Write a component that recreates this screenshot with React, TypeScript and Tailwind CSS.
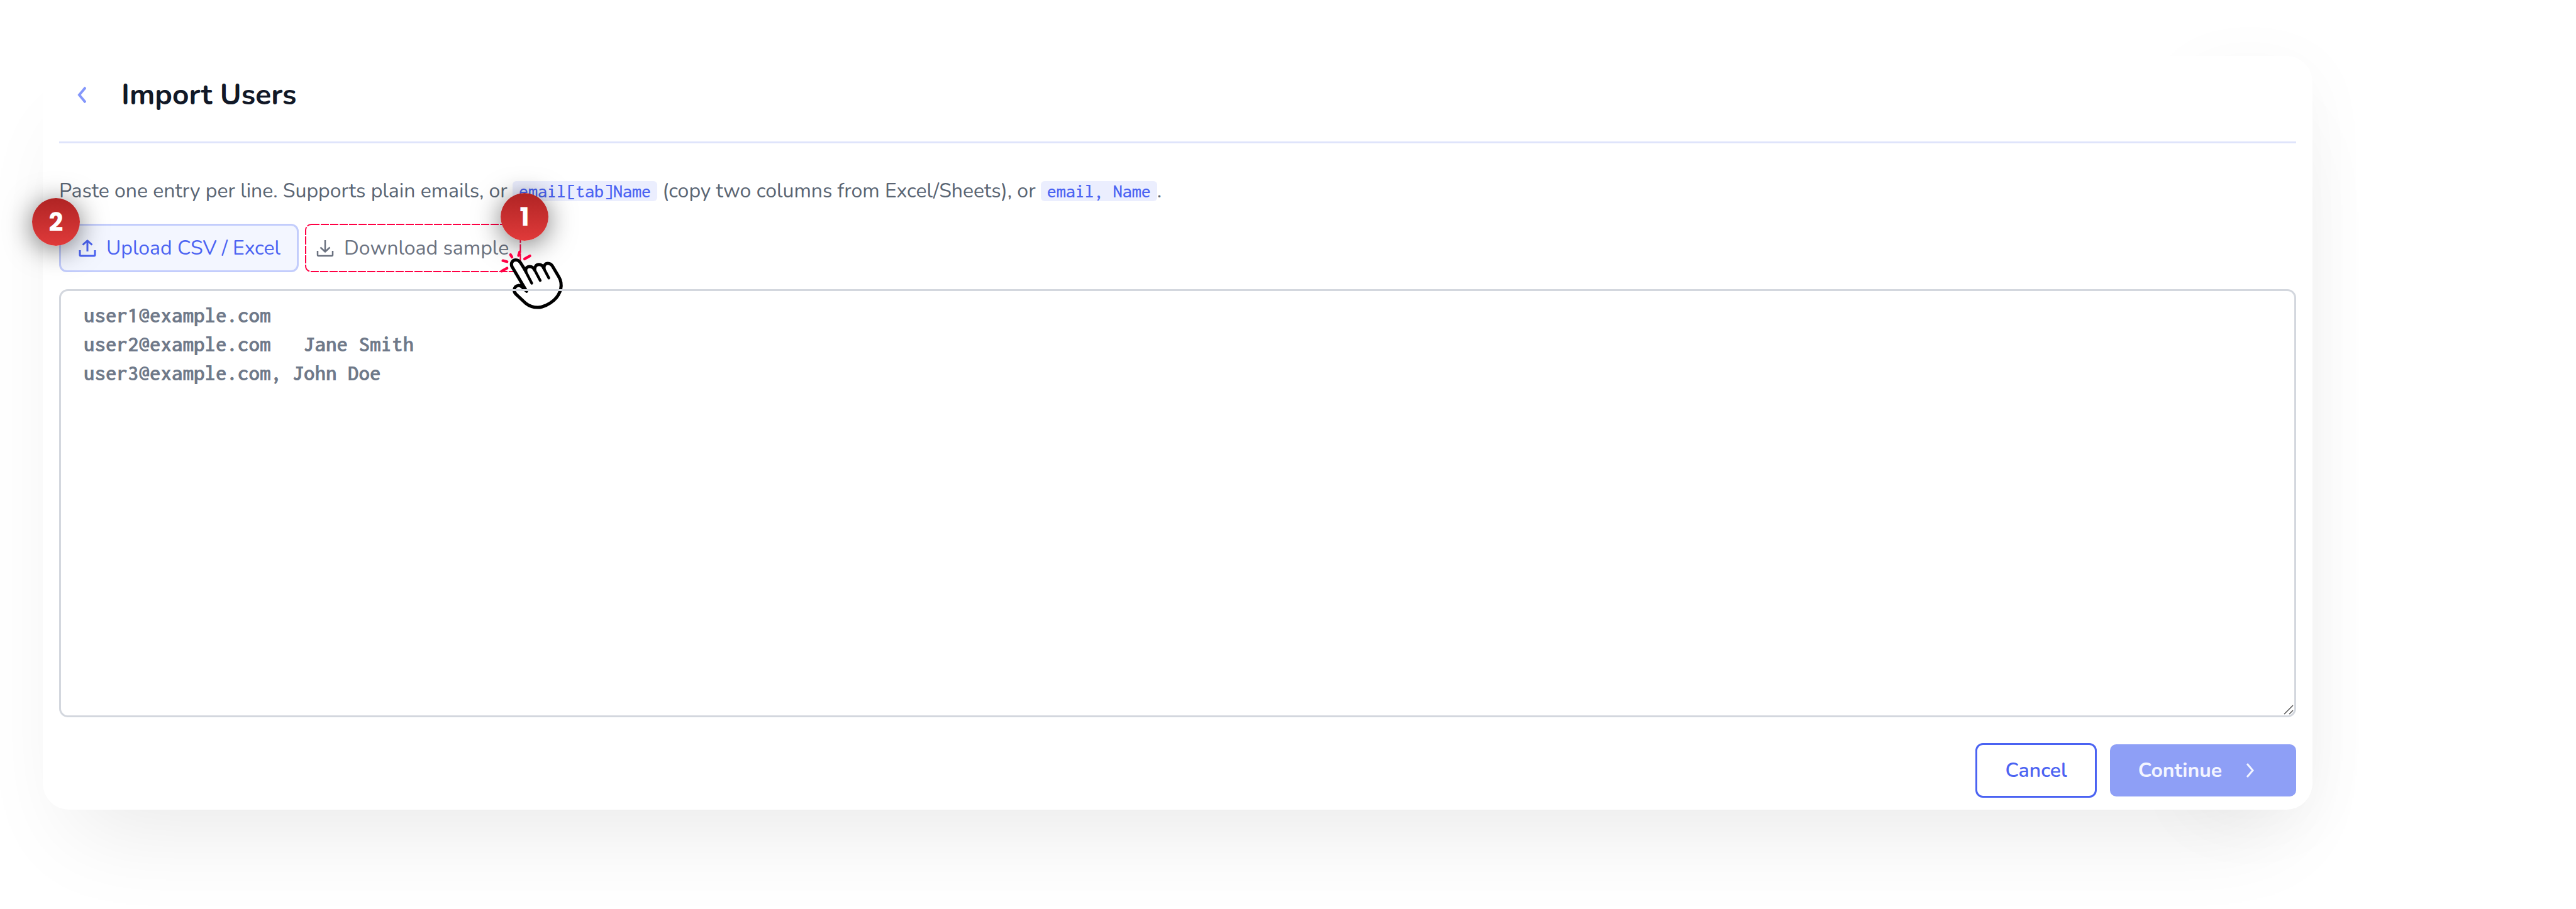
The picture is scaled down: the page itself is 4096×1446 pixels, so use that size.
import React from 'react';

const PLACEHOLDER = [
  'user1@example.com',
  'user2@example.com   Jane Smith',
  'user3@example.com, John Doe',
].join('\n');

const UploadIcon = () => (
  <svg className="size-7 shrink-0" viewBox="0 0 28 28" fill="none" stroke="currentColor" strokeWidth="3" strokeLinejoin="round">
    <path d="M2 17v7.5a1.5 1.5 0 0 0 1.5 1.5h21a1.5 1.5 0 0 0 1.5-1.5V17" />
    <path d="M14 19V3M6.5 8.5 14 1.8l7.5 6.7" />
  </svg>
);

const DownloadIcon = () => (
  <svg className="size-7 shrink-0" viewBox="0 0 28 28" fill="none" stroke="currentColor" strokeWidth="2.5" strokeLinejoin="round">
    <path d="M2 18v6.5a1.5 1.5 0 0 0 1.5 1.5h21a1.5 1.5 0 0 0 1.5-1.5V18" />
    <path d="M14 1v18M6.5 12.5 14 19.5l7.5-7" />
  </svg>
);

const Badge: React.FC<{ value: number; className: string }> = ({ value, className }) => (
  <span
    className={`absolute flex size-[76px] items-center justify-center rounded-full bg-linear-to-b from-[#b02424] to-[#e03a3a] font-[Poppins,Nunito,sans-serif] text-[40px] font-bold text-white shadow-[0_6px_44px_rgba(0,0,0,0.55)] ${className}`}
  >
    {value}
  </span>
);

const Code: React.FC<{ children: React.ReactNode }> = ({ children }) => (
  <code className="rounded-md bg-[#ebeefe] px-[10px] font-[Consolas,Inconsolata,'Liberation_Mono',monospace] text-[30px] leading-none font-medium text-[#4b63f2]">
    {children}
  </code>
);

// pointing hand with click marks
const HandPointer = () => (
  <svg className="pointer-events-none absolute top-[26px] left-[287px] size-[137px]" viewBox="0 0 600 600" fill="none" strokeLinecap="round" strokeLinejoin="round">
    <g stroke="#ff0044" strokeWidth="19">
      <path d="M112 216 150 195" />
      <path d="M121 143 150 150" />
      <path d="M174 101 184 118" />
      <path d="M238 82 230 107" />
      <path d="M272 131 309 110" />
    </g>
    <path
      d="M286 356 L184 184 C174 160 188 138 211 138 C229 138 238 148 246 161 L281 216 C274 200 290 184 308 184 C326 184 334 192 342 208 C342 184 354 170 372 170 C390 170 400 180 408 198 C404 178 416 162 434 162 C452 162 460 170 468 184 L512 258 C540 306 528 372 476 419 C446 446 400 468 364 469 C330 469 304 459 280 440 L214 378 C196 362 196 340 208 326 C218 314 238 312 252 324 Z"
      fill="#fff"
      stroke="#000"
      strokeWidth="22"
    />
    <path d="M270 200 322 300M338 200 381 281M402 190 441 264" stroke="#000" strokeWidth="19" />
  </svg>
);

const App: React.FC = () => (
  <div className="overflow-hidden bg-white pt-[89px] pr-[419px] pb-[158px] pl-[68px] font-[Nunito,'Nunito_Sans','Open_Sans',sans-serif] text-[32px] leading-[46px]">
    <div className="relative">
      <div className="absolute inset-y-0 right-0 w-[200px] rounded-[42px] shadow-[0_20px_110px_rgba(0,0,0,0.04)]" />
      <main className="relative rounded-[42px] bg-white px-[26px] pb-[19px] shadow-[0_80px_140px_-50px_rgba(0,0,0,0.09)]">
        <header className="flex items-center gap-[56px] border-b-3 border-[#dfe4fb] pt-[30px] pb-[42px] pl-[29px]">
          <button type="button" aria-label="Back" className="text-[#8497fb]">
            <svg className="h-[26px] w-[14px]" viewBox="0 0 14 26" fill="none" stroke="currentColor" strokeWidth="4">
              <path d="M13 1 3 13l10 12" />
            </svg>
          </button>
          <h1 className="text-[46px] leading-[64px] font-bold text-[#111827]">Import Users</h1>
        </header>

        <p className="mt-[53px] text-[#5a6573]">
          Paste one entry per line. Supports plain emails, or <Code>email[tab]Name</Code> (copy two columns from
          Excel/Sheets), or <Code>email, Name</Code>.
        </p>

        <div className="mt-[29px] flex gap-[10px]">
          <div className="relative">
            <button
              type="button"
              className="flex h-[77px] items-center gap-4 rounded-[12px] border-3 border-[#c3cdfc] bg-[#f3f6ff] pr-[26px] pl-[28px] text-[#4b63f2]"
            >
              <UploadIcon />
              Upload CSV / Excel
            </button>
            <Badge value={2} className="-top-[41px] -left-[43px]" />
          </div>
          <div className="relative">
            <button type="button" className="flex h-[77px] items-center gap-4 pr-[19px] pl-[18px] text-[#6b7280]">
              <DownloadIcon />
              Download sample
            </button>
            <svg className="pointer-events-none absolute inset-0 size-full overflow-visible" fill="none">
              <rect x="1" y="1" width="99.5%" height="75" rx="9" stroke="#ff0044" strokeWidth="2" strokeDasharray="13 2" />
            </svg>
            <Badge value={1} className="-top-[49px] left-[311px]" />
            <HandPointer />
          </div>
        </div>

        <div className="relative mt-[27px]">
          <textarea
            aria-label="Users to import"
            placeholder={PLACEHOLDER}
            className="block h-[681px] w-full resize-none rounded-[14px] border-3 border-[#d3d7de] px-[36px] py-[16px] font-[Consolas,Inconsolata,'Liberation_Mono',monospace] text-[35px] leading-[46px] font-bold placeholder:text-[#6f7989]"
          />
          <svg className="pointer-events-none absolute right-1 bottom-1 size-4" viewBox="0 0 16 16" stroke="#555" strokeWidth="1.5">
            <path d="M1 15 15 1M9 15l6-6" />
          </svg>
        </div>

        <div className="mt-[41px] flex items-center justify-end gap-[21px]">
          <button type="button" className="h-[87px] rounded-[12px] border-3 border-[#4b63f2] px-[44px] font-semibold text-[#4b63f2]">
            Cancel
          </button>
          <button
            type="button"
            className="flex h-[83px] items-center gap-[38px] rounded-[10px] bg-[#8e9ff6] pr-[67px] pl-[45px] font-bold text-[#f3f5ff]"
          >
            Continue
            <svg className="h-[23px] w-[13px]" viewBox="0 0 13 23" fill="none" stroke="currentColor" strokeWidth="3">
              <path d="M2 1l9 10.5L2 22" />
            </svg>
          </button>
        </div>
      </main>
    </div>
  </div>
);

export default App;
